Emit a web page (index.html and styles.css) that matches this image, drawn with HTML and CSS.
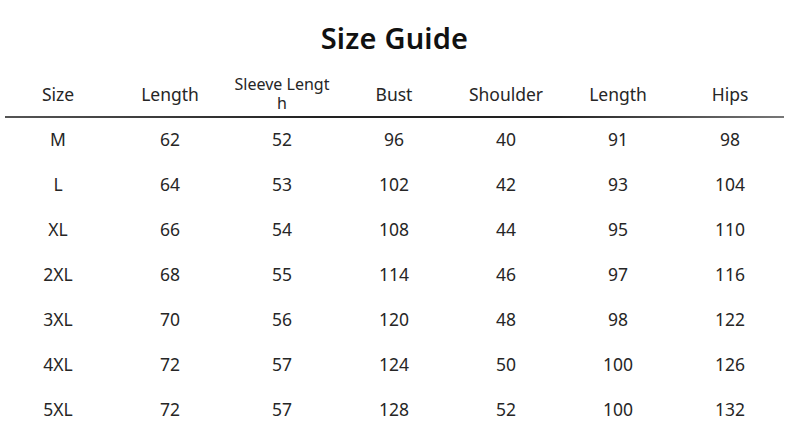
FILE: index.html
```html
<!DOCTYPE html>
<html>
<head>
<meta charset="utf-8">
<link rel="stylesheet" href="styles.css">
</head>
<body>
<div class="page">
  <h1 class="title">Size Guide</h1>
  <div class="table">
    <div class="row head">
      <div class="cell">Size</div>
      <div class="cell">Length</div>
      <div class="cell small">Sleeve Lengt<br>h</div>
      <div class="cell">Bust</div>
      <div class="cell">Shoulder</div>
      <div class="cell">Length</div>
      <div class="cell">Hips</div>
    </div>
    <div class="rule"></div>
    <div class="row"><div class="cell">M</div><div class="cell">62</div><div class="cell">52</div><div class="cell">96</div><div class="cell">40</div><div class="cell">91</div><div class="cell">98</div></div>
    <div class="row"><div class="cell">L</div><div class="cell">64</div><div class="cell">53</div><div class="cell">102</div><div class="cell">42</div><div class="cell">93</div><div class="cell">104</div></div>
    <div class="row"><div class="cell">XL</div><div class="cell">66</div><div class="cell">54</div><div class="cell">108</div><div class="cell">44</div><div class="cell">95</div><div class="cell">110</div></div>
    <div class="row"><div class="cell">2XL</div><div class="cell">68</div><div class="cell">55</div><div class="cell">114</div><div class="cell">46</div><div class="cell">97</div><div class="cell">116</div></div>
    <div class="row"><div class="cell">3XL</div><div class="cell">70</div><div class="cell">56</div><div class="cell">120</div><div class="cell">48</div><div class="cell">98</div><div class="cell">122</div></div>
    <div class="row"><div class="cell">4XL</div><div class="cell">72</div><div class="cell">57</div><div class="cell">124</div><div class="cell">50</div><div class="cell">100</div><div class="cell">126</div></div>
    <div class="row"><div class="cell">5XL</div><div class="cell">72</div><div class="cell">57</div><div class="cell">128</div><div class="cell">52</div><div class="cell">100</div><div class="cell">132</div></div>
  </div>
</div>
</body>
</html>
```
FILE: styles.css
```css
html, body {
  margin: 0;
  padding: 0;
  background: #ffffff;
}
body {
  font-family: "Noto Sans", "Open Sans", sans-serif;
  color: #262626;
  width: 789px;
  height: 445px;
  overflow: hidden;
}
.page {
  display: flex;
  flex-direction: column;
}
.title {
  margin: 0;
  height: 72px;
  display: flex;
  align-items: center;
  justify-content: center;
  padding-top: 2px;
  box-sizing: border-box;
  font-size: 29px;
  font-weight: 600;
  color: #111111;
  letter-spacing: 0.2px;
}
.table {
  display: flex;
  flex-direction: column;
}
.row {
  display: grid;
  grid-template-columns: repeat(7, 112px);
  padding-left: 2px;
  padding-bottom: 4px;
  box-sizing: border-box;
  height: 45px;
  align-items: center;
  font-size: 17.5px;
  font-weight: 400;
}
.row.head {
  height: 44px;
  padding-bottom: 0;
}
.cell {
  text-align: center;
  line-height: 20px;
}
.cell.small {
  font-size: 16px;
  line-height: 19px;
  padding-bottom: 1px;
}
.rule {
  margin: 0 5px 0 5px;
  height: 2px;
  background: linear-gradient(to right, #555 0%, #222 40%, #222 70%, #777 100%);
}
```
